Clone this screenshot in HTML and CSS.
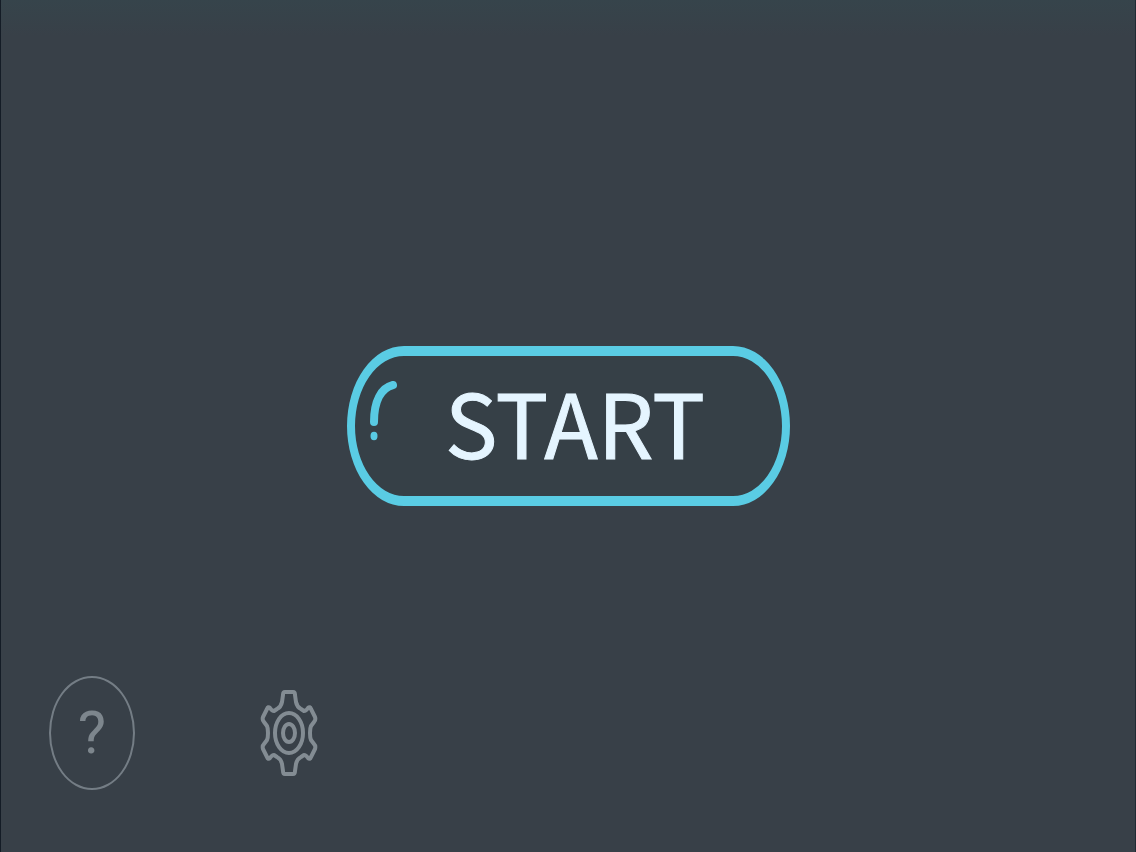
FILE: index.html
```html
<!DOCTYPE html>
<html lang="en">
<head>
<meta charset="utf-8">
<meta name="viewport" content="width=device-width, initial-scale=1">
<title>Start</title>
<link rel="stylesheet" href="styles.css">
</head>
<body>
<main class="screen">
  <button class="start" type="button">
    <svg class="shine" viewBox="0 0 30 62" aria-hidden="true">
      <path d="M24 6C12 9 5 22 5 43" fill="none" stroke="#59cae3" stroke-width="8" stroke-linecap="round"/>
      <ellipse cx="5" cy="57" rx="3.5" ry="4.2" fill="#59cae3"/>
    </svg>
    <span class="label">START</span>
  </button>
  <nav class="tools" aria-label="Options">
    <button class="help" type="button" aria-label="Help">?</button>
    <button class="settings" type="button" aria-label="Settings">
      <svg class="gear" viewBox="0 0 58 88" fill="none" stroke="#838c93" stroke-width="4" stroke-linejoin="round" aria-hidden="true">
        <path d="M25 3H33Q35 3 35 6L36 13Q37 18 41 20L44 22Q46 22 48 19Q50 17 51 20L55 28Q56 31 54 33L51 37Q50 39 50 44Q50 49 51 51L54 55Q56 57 55 60L51 68Q50 71 48 69Q46 66 44 66L41 68Q37 70 36 75L35 82Q35 85 33 85H25Q23 85 23 82L22 75Q21 70 17 68L14 66Q12 66 10 69Q8 71 7 68L3 60Q2 57 4 55L7 51Q8 49 8 44Q8 39 7 37L4 33Q2 31 3 28L7 20Q8 17 10 19Q12 22 14 22L17 20Q21 18 22 13L23 6Q23 3 25 3Z"/>
        <ellipse cx="29" cy="44" rx="14" ry="20"/>
        <ellipse cx="29" cy="44" rx="6" ry="9"/>
      </svg>
    </button>
  </nav>
</main>
</body>
</html>
```
FILE: styles.css
```css
* {
  box-sizing: border-box;
}

body {
  margin: 0;
  font-family: "Noto Sans CJK JP", "Open Sans", sans-serif;
}

.screen {
  display: grid;
  grid-template-rows: 1fr auto 1fr;
  justify-items: center;
  min-height: 100vh;
  border-left: 1px solid #141c26;
  border-right: 1px solid #202b34;
  background: linear-gradient(#36444b 0, #384048 36px);
}

button {
  padding: 0;
  background: none;
  font: inherit;
  cursor: pointer;
}

.start {
  position: relative;
  grid-row: 2;
  display: flex;
  align-items: center;
  justify-content: center;
  width: 443px;
  height: 160px;
  padding: 0 0 10px 14px;
  border: solid #5acce4;
  border-width: 10px 8px;
  border-radius: 57px / 80px;
  background: #364047;
  color: #e5f5ff;
}

.shine {
  position: absolute;
  left: 14px;
  top: 23px;
  width: 30px;
  height: 62px;
}

.label {
  font-size: 88px;
  line-height: 100px;
  -webkit-text-stroke: 1px #e5f5ff;
}

.tools {
  grid-row: 3;
  justify-self: stretch;
  align-self: end;
  display: flex;
  align-items: center;
  gap: 125px;
  padding: 0 48px 62px;
}

.help {
  width: 86px;
  height: 114px;
  border: 2px solid #747d85;
  border-radius: 50%;
  color: #7d868d;
  font-family: Roboto, sans-serif;
  font-size: 60px;
  line-height: 60px;
}

.settings {
  border: 0;
}

.gear {
  display: block;
  width: 58px;
  height: 88px;
}
```
